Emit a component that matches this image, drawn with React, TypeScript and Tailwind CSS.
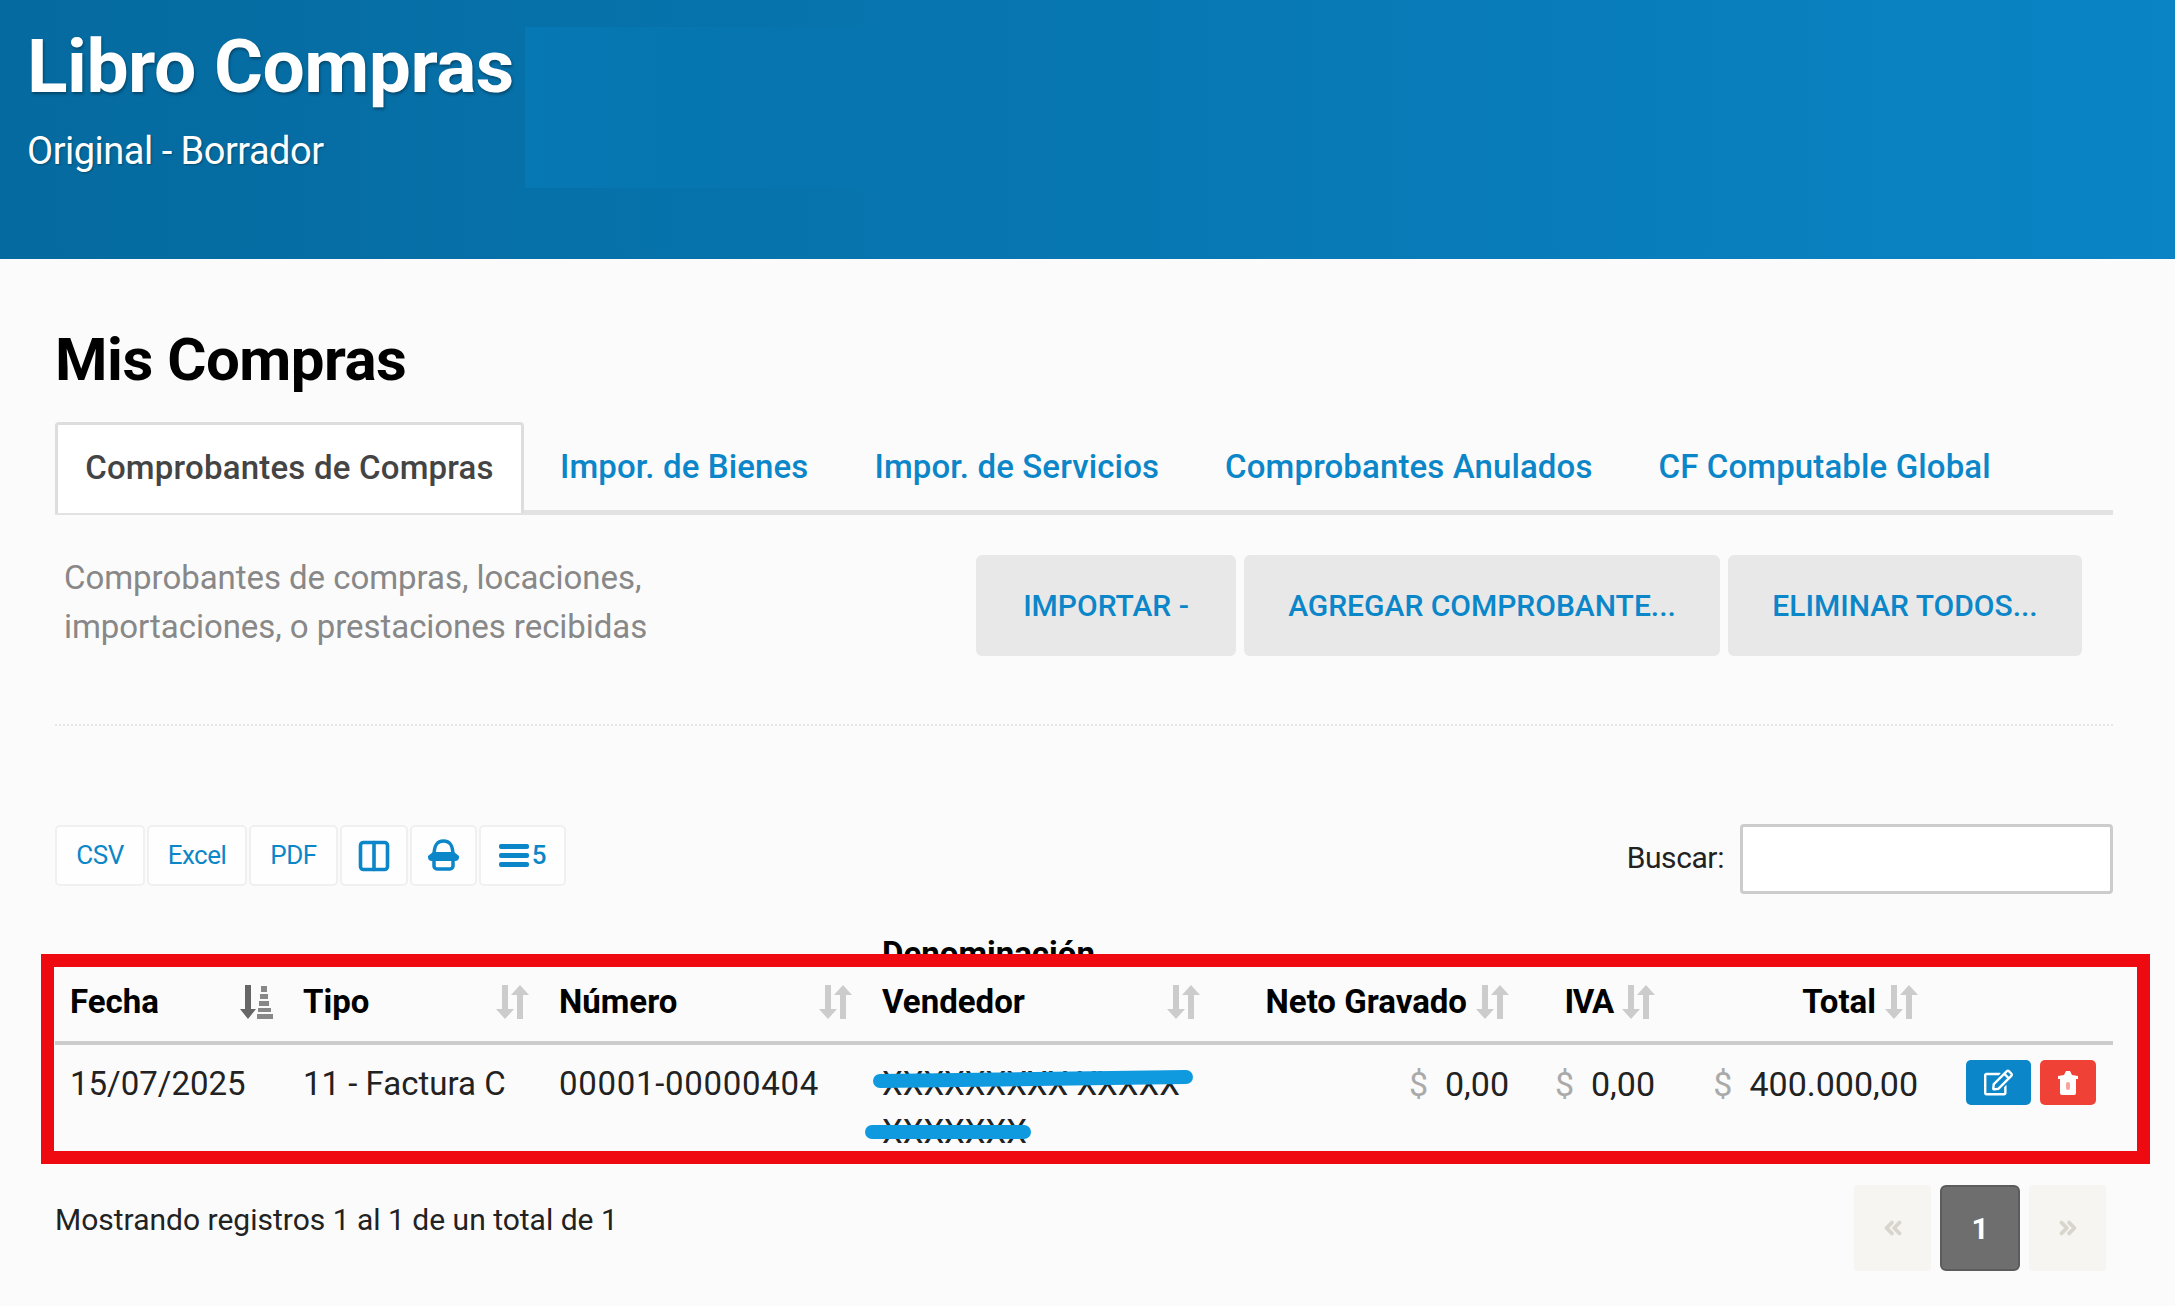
import React from 'react';
import { ChevronsLeft, ChevronsRight, Columns2 } from 'lucide-react';
import { FaRegEdit } from 'react-icons/fa';

const tabs = ['Impor. de Bienes', 'Impor. de Servicios', 'Comprobantes Anulados', 'CF Computable Global'];

// gray down + up arrow shown in every sortable column
function SortIcon() {
  return (
    <svg width="33" height="36" viewBox="0 0 33 36" className="shrink-0" fill="#cccccc">
      <path d="M6 1h6v24h6L9 35 0 25h6z" />
      <path d="M21 35h6V11h6L24 1l-9 10h6z" />
    </svg>
  );
}

function SortActiveIcon() {
  return (
    <svg width="33" height="36" viewBox="0 0 33 36" className="shrink-0">
      <path d="M5 1h6v24h5L8 35 0 25h5z" fill="#666666" />
      <path d="M21 2h6v6h-6zM20 10h8v5h-8zM19 17h10v5H19zM18 24h13v4H18zM17 30h16v5H17z" fill="#888888" />
    </svg>
  );
}

function PrintIcon() {
  return (
    <svg width="33" height="33" viewBox="0 0 33 33" fill="none" stroke="currentColor" strokeWidth="3.500">
      <path d="M7 17C7 6 10 2 16.500 2S26 6 26 17" />
      <path d="M7 21v6a3 3 0 0 0 3 3h13a3 3 0 0 0 3-3v-6" />
      <path d="M6 13h21l5 4v1a4 4 0 0 1-4 4H5a4 4 0 0 1-4-4v-1z" fill="currentColor" stroke="none" />
    </svg>
  );
}

function TrashIcon() {
  return (
    <svg width="22" height="26" viewBox="0 0 22 26">
      <path d="M1 6l6-1 2-4h4l2 4 6 1v3h-2v14a2 2 0 0 1-2 2H5a2 2 0 0 1-2-2V9H1z" fill="#ffffff" />
      <rect x="9" y="12" width="4" height="8" rx="2" fill="#f6a59e" />
    </svg>
  );
}

function ToolButton({ className, children }: { className: string; children: React.ReactNode }) {
  return (
    <button className={`h-[61px] flex items-center justify-center gap-[3px] rounded-[5px] border-2 border-[#f0f0f0] bg-[#fefefe] text-[26px] tracking-[-0.5px] text-[#0b86c8] ${className}`}>
      {children}
    </button>
  );
}

function Money({ value }: { value: string }) {
  return (
    <span className="inline-flex gap-[17px] text-[34px]">
      <span className="text-[#aaaaaa]">$</span>
      {value}
    </span>
  );
}

export default function App() {
  return (
    <div className="min-h-screen overflow-hidden bg-[#fbfbfb] font-['Roboto',sans-serif] text-[#222222]">
      <header className="relative h-[259px] bg-gradient-to-r from-[#056a9f] to-[#0a84c5] pl-[27px] pt-[21px] text-white">
        <div className="absolute left-[525px] top-[27px] h-[161px] w-[500px] bg-gradient-to-r from-[#0678b3] to-transparent" />
        <h1 className="relative text-[75px] font-bold leading-[90px] tracking-[-0.5px] [text-shadow:1px_2px_3px_rgba(0,0,0,0.35)]">Libro Compras</h1>
        <p className="relative mt-[18px] text-[38px] leading-[44px] tracking-[-0.5px] [text-shadow:1px_1px_2px_rgba(0,0,0,0.3)]">Original - Borrador</p>
      </header>

      <main className="pl-[55px] pr-[62px]">
        <h2 className="mt-[66px] text-[60px] font-bold leading-[70px] tracking-[-0.5px] text-black">Mis Compras</h2>

        <nav className="mt-[27px] flex h-[93px] border-b-[5px] border-[#e2e2e2]">
          <a className="flex h-[91px] w-[469px] items-center justify-center rounded-t-[4px] border-[3px] border-b-0 border-[#dddddd] bg-white pb-[3px] text-[33px] font-medium tracking-[0.2px] text-[#444444]">
            Comprobantes de Compras
          </a>
          <div className="ml-[3px] flex">
            {tabs.map(t => (
              <a key={t} className="flex h-[89px] items-center px-[33px] text-[33px] font-medium tracking-[0.12px] text-[#0b86c8]">{t}</a>
            ))}
          </div>
        </nav>

        <section className="mt-[40px] flex justify-between pl-[9px] pr-[31px]">
          <p className="-mt-[2px] text-[33px] leading-[49px] tracking-[-0.05px] text-[#888888]">
            Comprobantes de compras, locaciones,<br />importaciones, o prestaciones recibidas
          </p>
          <div className="flex gap-[8px] text-[30px] font-medium text-[#0b86c8]">
            <button className="h-[101px] w-[260px] rounded-[6px] bg-[#e8e8e8]">IMPORTAR -</button>
            <button className="h-[101px] w-[476px] rounded-[6px] bg-[#e8e8e8]">AGREGAR COMPROBANTE...</button>
            <button className="h-[101px] w-[354px] rounded-[6px] bg-[#e8e8e8]">ELIMINAR TODOS...</button>
          </div>
        </section>

        <div className="mt-[68px] border-t-2 border-dotted border-[#e6e6e6]" />

        <section className="mt-[98px] flex items-start justify-between">
          <div className="mt-[1px] flex gap-[2px]">
            <ToolButton className="w-[90px]">CSV</ToolButton>
            <ToolButton className="w-[100px]">Excel</ToolButton>
            <ToolButton className="w-[89px]">PDF</ToolButton>
            <ToolButton className="w-[68px]"><Columns2 size={36} strokeWidth={2.4} /></ToolButton>
            <ToolButton className="w-[67px]"><PrintIcon /></ToolButton>
            <ToolButton className="w-[87px] font-medium">
              <svg width="30" height="26" viewBox="0 0 30 26" fill="currentColor"><rect width="30" height="5" y="1" rx="2" /><rect width="30" height="5" y="10" rx="2" /><rect width="30" height="5" y="19" rx="2" /></svg>
              5
            </ToolButton>
          </div>
          <label className="flex items-center gap-[16px] text-[30px] tracking-[-0.4px]">
            <span className="pb-[4px]">Buscar:</span>
            <input className="h-[70px] w-[373px] rounded-[4px] border-[3px] border-[#cccccc] bg-white" />
          </label>
        </section>

        <div className="relative mt-[28px]">
          <table className="w-full table-fixed border-collapse text-[33px]">
            <colgroup>
              <col className="w-[235px]" />
              <col className="w-[255px]" />
              <col className="w-[323px]" />
              <col className="w-[348px]" />
              <col className="w-[309px]" />
              <col className="w-[146px]" />
              <col className="w-[263px]" />
              <col />
            </colgroup>
            <thead>
              <tr className="border-b-4 border-[#cccccc] text-black">
                <th className="pb-[15px] pl-[15px] pr-[17px] pt-[8px] align-bottom font-bold leading-[48px]">
                  <div className="flex items-center justify-between">Fecha <SortActiveIcon /></div>
                </th>
                <th className="pb-[15px] pl-[13px] pr-[16px] pt-[8px] align-bottom font-bold leading-[48px]">
                  <div className="flex items-center justify-between">Tipo <SortIcon /></div>
                </th>
                <th className="pb-[15px] pl-[14px] pr-[16px] pt-[8px] align-bottom font-bold leading-[48px]">
                  <div className="flex items-center justify-between">Número <SortIcon /></div>
                </th>
                <th className="pb-[15px] pl-[14px] pr-[16px] pt-[8px] text-left align-bottom font-bold leading-[48px]">
                  Denominación
                  <div className="flex items-center justify-between">Vendedor <SortIcon /></div>
                </th>
                <th className="pb-[15px] pr-[16px] pt-[8px] align-bottom font-bold leading-[48px]">
                  <div className="flex items-center justify-end gap-[9px]">Neto Gravado <SortIcon /></div>
                </th>
                <th className="pb-[15px] pr-[16px] pt-[8px] align-bottom font-bold leading-[48px]">
                  <div className="flex items-center justify-end gap-[9px] tracking-[-1.2px]">IVA <SortIcon /></div>
                </th>
                <th className="pb-[15px] pr-[16px] pt-[8px] align-bottom font-bold leading-[48px]">
                  <div className="flex items-center justify-end gap-[9px]">Total <SortIcon /></div>
                </th>
                <th />
              </tr>
            </thead>
            <tbody>
              <tr className="align-top leading-[48px]">
                <td className="pb-[6px] pl-[15px] pt-[15px]">15/07/2025</td>
                <td className="pl-[13px] pt-[15px]">11 - Factura C</td>
                <td className="pl-[14px] pt-[15px] tracking-[0.7px]">00001-00000404</td>
                <td className="relative pl-[14px] pr-[16px] pt-[15px]">
                  XXXXXXXXX XXXXX<br />XXXXXXX
                  <svg className="absolute left-0 top-0 overflow-visible" width="340" height="110" fill="none" stroke="#0f9ae0" strokeWidth="14" strokeLinecap="round">
                    <path d="M12 36 L318 32" />
                    <path d="M4 87 L156 87" />
                  </svg>
                </td>
                <td className="pr-[16px] pt-[15px] text-right"><Money value="0,00" /></td>
                <td className="pr-[16px] pt-[15px] text-right"><Money value="0,00" /></td>
                <td className="pr-[16px] pt-[15px] text-right"><Money value="400.000,00" /></td>
                <td className="pr-[17px] pt-[15px]">
                  <div className="flex justify-end gap-[9px]">
                    <button className="flex h-[45px] w-[65px] items-center justify-center rounded-[5px] bg-[#0a86c9] text-white"><FaRegEdit size={29} /></button>
                    <button className="flex h-[45px] w-[56px] items-center justify-center rounded-[5px] bg-[#ef4136]"><TrashIcon /></button>
                  </div>
                </td>
              </tr>
            </tbody>
          </table>
          {/* annotation box over the table */}
          <div className="pointer-events-none absolute left-[-14px] top-[32px] h-[210px] w-[2109px] border-[13px] border-[#ee0a10]" />
        </div>

        <footer className="mt-[29px] flex items-start justify-between pr-[7px]">
          <p className="pt-[15px] text-[30px] leading-[40px]">Mostrando registros 1 al 1 de un total de 1</p>
          <div className="flex gap-[9px] font-bold">
            <span className="flex h-[86px] w-[77px] items-center justify-center rounded-[4px] bg-[#f6f5f2] text-[#d8d5cc]"><ChevronsLeft size={26} strokeWidth={3.5} /></span>
            <span className="flex h-[86px] w-[80px] items-center justify-center rounded-[6px] border-2 border-[#5c5c5c] bg-[#6e6e6e] text-[30px] text-white">1</span>
            <span className="flex h-[86px] w-[77px] items-center justify-center rounded-[4px] bg-[#f6f5f2] text-[#d8d5cc]"><ChevronsRight size={26} strokeWidth={3.5} /></span>
          </div>
        </footer>
      </main>
    </div>
  );
}
